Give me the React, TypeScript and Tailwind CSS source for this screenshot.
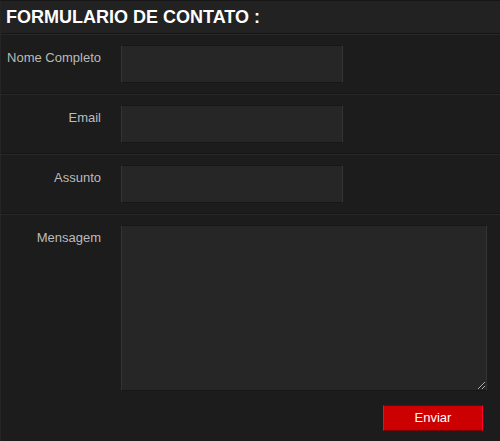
import type { ReactNode } from "react";

const fieldStyle =
  "block h-[38px] w-full max-w-[222px] border border-x-[#343434] border-y-[#161616] bg-[#262626] px-2 text-[13px] text-[#bbbbbb] outline-none";

function Row({ id, label, last, children }: { id: string; label: string; last?: boolean; children: ReactNode }) {
  return (
    <div className={last ? "" : "border-b border-[#282828]"}>
      <div className={last ? "flex gap-5 pt-2.5 pr-[13px]" : "flex gap-5 border-b border-[#151515] py-2.5 pr-[13px]"}>
        <label htmlFor={id} className="w-[100px] shrink-0 pt-1 text-right text-[13px] leading-[18px] text-[#bbbbbb]">
          {label}
        </label>
        <div className="min-w-0 flex-1">{children}</div>
      </div>
    </div>
  );
}

export default function App() {
  return (
    <form
      className="border-y border-l border-t-[#161616] border-b-[#141414] border-l-[#252525] bg-[#1c1c1c] font-['Liberation_Sans',Arial,sans-serif]"
      onSubmit={(e) => e.preventDefault()}
    >
      <div className="border-b border-[#282828]">
        <h1 className="border-b border-[#151515] bg-[#222222] px-[5px] text-lg leading-8 font-bold text-white">
          FORMULARIO DE CONTATO :
        </h1>
      </div>
      <Row id="nome" label="Nome Completo">
        <input id="nome" type="text" className={fieldStyle} />
      </Row>
      <Row id="email" label="Email">
        <input id="email" type="email" className={fieldStyle} />
      </Row>
      <Row id="assunto" label="Assunto">
        <input id="assunto" type="text" className={fieldStyle} />
      </Row>
      <Row id="mensagem" label="Mensagem" last>
        <div className="relative">
          <textarea
            id="mensagem"
            className="block h-[166px] w-full resize-none border border-x-[#343434] border-y-[#161616] bg-[#262626] p-2 text-[13px] text-[#bbbbbb] outline-none"
          />
          <svg
            className="pointer-events-none absolute right-0.5 bottom-0.5"
            width="7"
            height="7"
            viewBox="0 0 7 7"
            shapeRendering="crispEdges"
            aria-hidden="true"
          >
            <path
              fill="#b4b4b4"
              d="M0 6h1v1H0zM1 5h1v1H1zM2 4h1v1H2zM3 3h1v1H3zM4 2h1v1H4zM5 1h1v1H5zM6 0h1v1H6zM4 6h1v1H4zM5 5h1v1H5zM6 4h1v1H6z"
            />
            <path fill="#111111" d="M1 6h1v1H1zM2 5h1v1H2zM3 4h1v1H3zM4 3h1v1H4zM5 2h1v1H5zM6 1h1v1H6zM5 6h1v1H5zM6 5h1v1H6z" />
          </svg>
        </div>
      </Row>
      <div className="flex justify-end pt-3.5 pr-[17px] pb-2.5">
        <button
          type="submit"
          className="h-[26px] w-[100px] border border-x-[#ff0033] border-y-[#7a0000] bg-[#cc0000] text-[13px] text-white"
        >
          Enviar
        </button>
      </div>
    </form>
  );
}
